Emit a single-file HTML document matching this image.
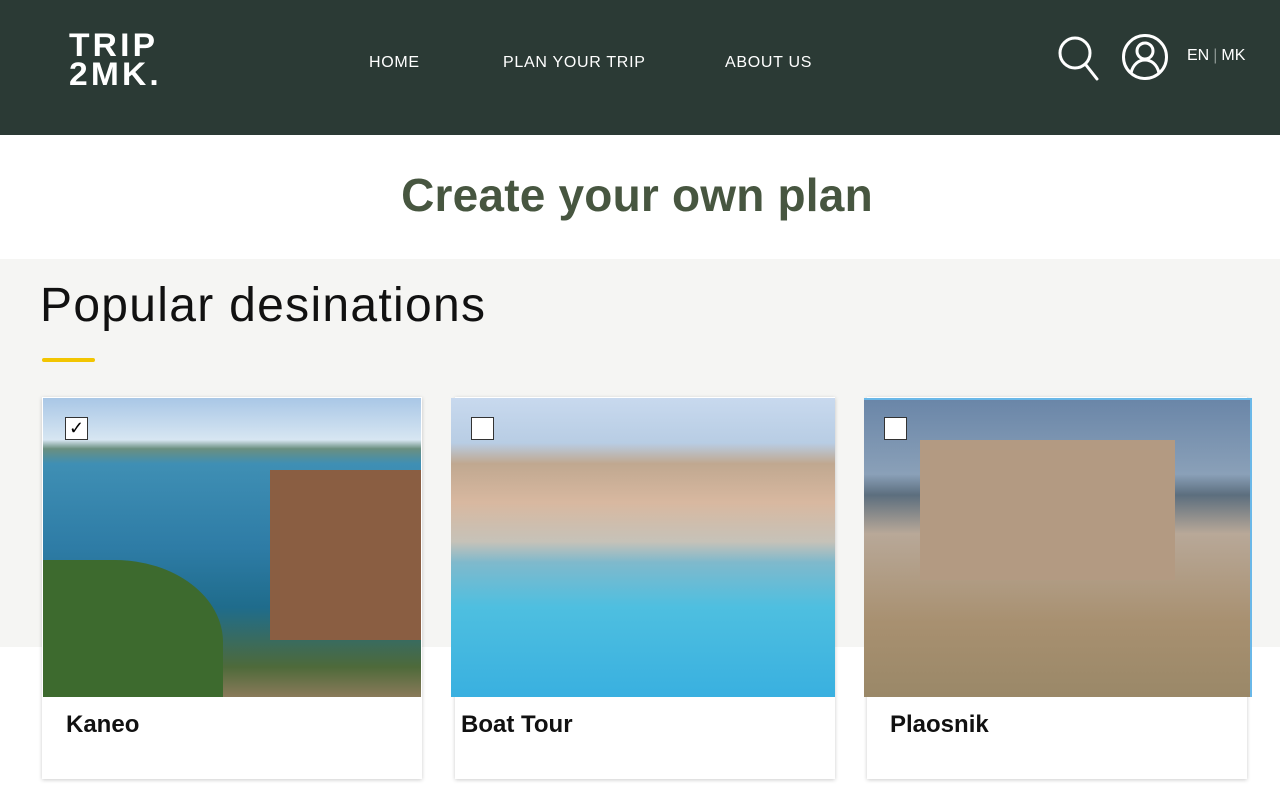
<!DOCTYPE html>
<html><head><style>
*{margin:0;padding:0;box-sizing:border-box}
body{width:1280px;height:800px;overflow:hidden;background:#fff;font-family:"Liberation Sans",sans-serif;position:relative}
.hdr{position:absolute;left:0;top:0;width:1280px;height:135px;background:#2b3a35}
.logo{position:absolute;left:69px;top:31px;color:#fff;font-weight:900;font-size:32px;line-height:29px;letter-spacing:3px;transform:scaleX(1.05);transform-origin:left}
.nav{position:absolute;top:54px;color:#fff;font-size:16px;letter-spacing:.7px}
.lang{position:absolute;left:1187px;top:47px;color:#fff;font-size:16px}
.lang i{color:#8a9591;font-style:normal;margin:0 4px}
h1{position:absolute;top:168px;left:0;width:1274px;text-align:center;color:#475640;font-size:46px;font-weight:700;letter-spacing:.2px}
.gray{position:absolute;left:0;top:259px;width:1280px;height:388px;background:#f5f5f3}
h2{position:absolute;left:40px;top:278px;font-size:48px;font-weight:400;color:#111;letter-spacing:1.3px}
.bar{position:absolute;left:42px;top:358px;width:53px;height:4px;background:#f2c500;border-radius:2px}
.card{position:absolute;background:#fff;box-shadow:0 1px 4px rgba(0,0,0,.2)}
.img{position:absolute}
.t{position:absolute;font-size:24px;font-weight:700;color:#111}
.cb{position:absolute;width:23px;height:23px;background:#fff;border:1px solid #333}
</style></head><body>
<div class="hdr">
<div class="logo">TRIP<br>2MK.</div>
<div class="nav" style="left:369px">HOME</div>
<div class="nav" style="left:503px">PLAN YOUR TRIP</div>
<div class="nav" style="left:725px">ABOUT US</div>
<svg style="position:absolute;left:1057px;top:35px" width="42" height="46" viewBox="0 0 42 46" fill="none" stroke="#fff" stroke-width="3"><circle cx="18" cy="18" r="15"/><path d="M29 30l11 14" stroke-linecap="round"/></svg>
<svg style="position:absolute;left:1121px;top:33px" width="48" height="48" viewBox="0 0 48 48" fill="none" stroke="#fff" stroke-width="3"><circle cx="24" cy="24" r="21.5"/><circle cx="24" cy="18" r="8"/><path d="M10 40c2-9 8-13 14-13s12 4 14 13"/></svg>
<div class="lang">EN<i>|</i>MK</div>
</div>
<h1>Create your own plan</h1>
<div class="gray"></div>
<h2>Popular desinations</h2>
<div class="bar"></div>

<div class="card" style="left:42px;top:397px;width:380px;height:382px"></div>
<div class="img" style="left:43px;top:398px;width:378px;height:299px;background:linear-gradient(180deg,#a9c7e6 0%,#d7e6f2 14%,#6a8f80 17%,#3f8fb4 22%,#2e7ca6 50%,#1f6c8c 70%,#4e6a3a 90%,#8a7a5a 100%)"></div>
<div class="img" style="left:270px;top:470px;width:151px;height:170px;background:#8a5e42"></div>
<div class="img" style="left:43px;top:560px;width:180px;height:137px;background:#3d6a2e;border-radius:0 60% 0 0"></div>
<div class="cb" style="left:65px;top:417px;font-size:18px;line-height:20px;text-align:center">✓</div>
<div class="t" style="left:66px;top:711px">Kaneo</div>

<div class="card" style="left:455px;top:397px;width:380px;height:382px"></div>
<div class="img" style="left:451px;top:398px;width:384px;height:299px;background:linear-gradient(180deg,#c8d9ee 0%,#b8cde4 15%,#c0a890 22%,#d8b8a0 35%,#c6c2b8 48%,#7fb9cc 55%,#4ebfe0 70%,#39b0e0 100%)"></div>
<div class="cb" style="left:471px;top:417px"></div>
<div class="t" style="left:461px;top:711px">Boat Tour</div>

<div class="card" style="left:867px;top:397px;width:380px;height:382px"></div>
<div class="img" style="left:864px;top:398px;width:388px;height:299px;background:linear-gradient(180deg,#6a86a8 0%,#8aa0b8 25%,#5c6e7e 32%,#b8a898 45%,#a89070 75%,#9a8868 100%);border-top:2px solid #6ab8e8;border-right:2px solid #6ab8e8"></div>
<div class="img" style="left:920px;top:440px;width:255px;height:140px;background:#b39a82"></div>
<div class="cb" style="left:884px;top:417px"></div>
<div class="t" style="left:890px;top:711px">Plaosnik</div>
</body></html>
